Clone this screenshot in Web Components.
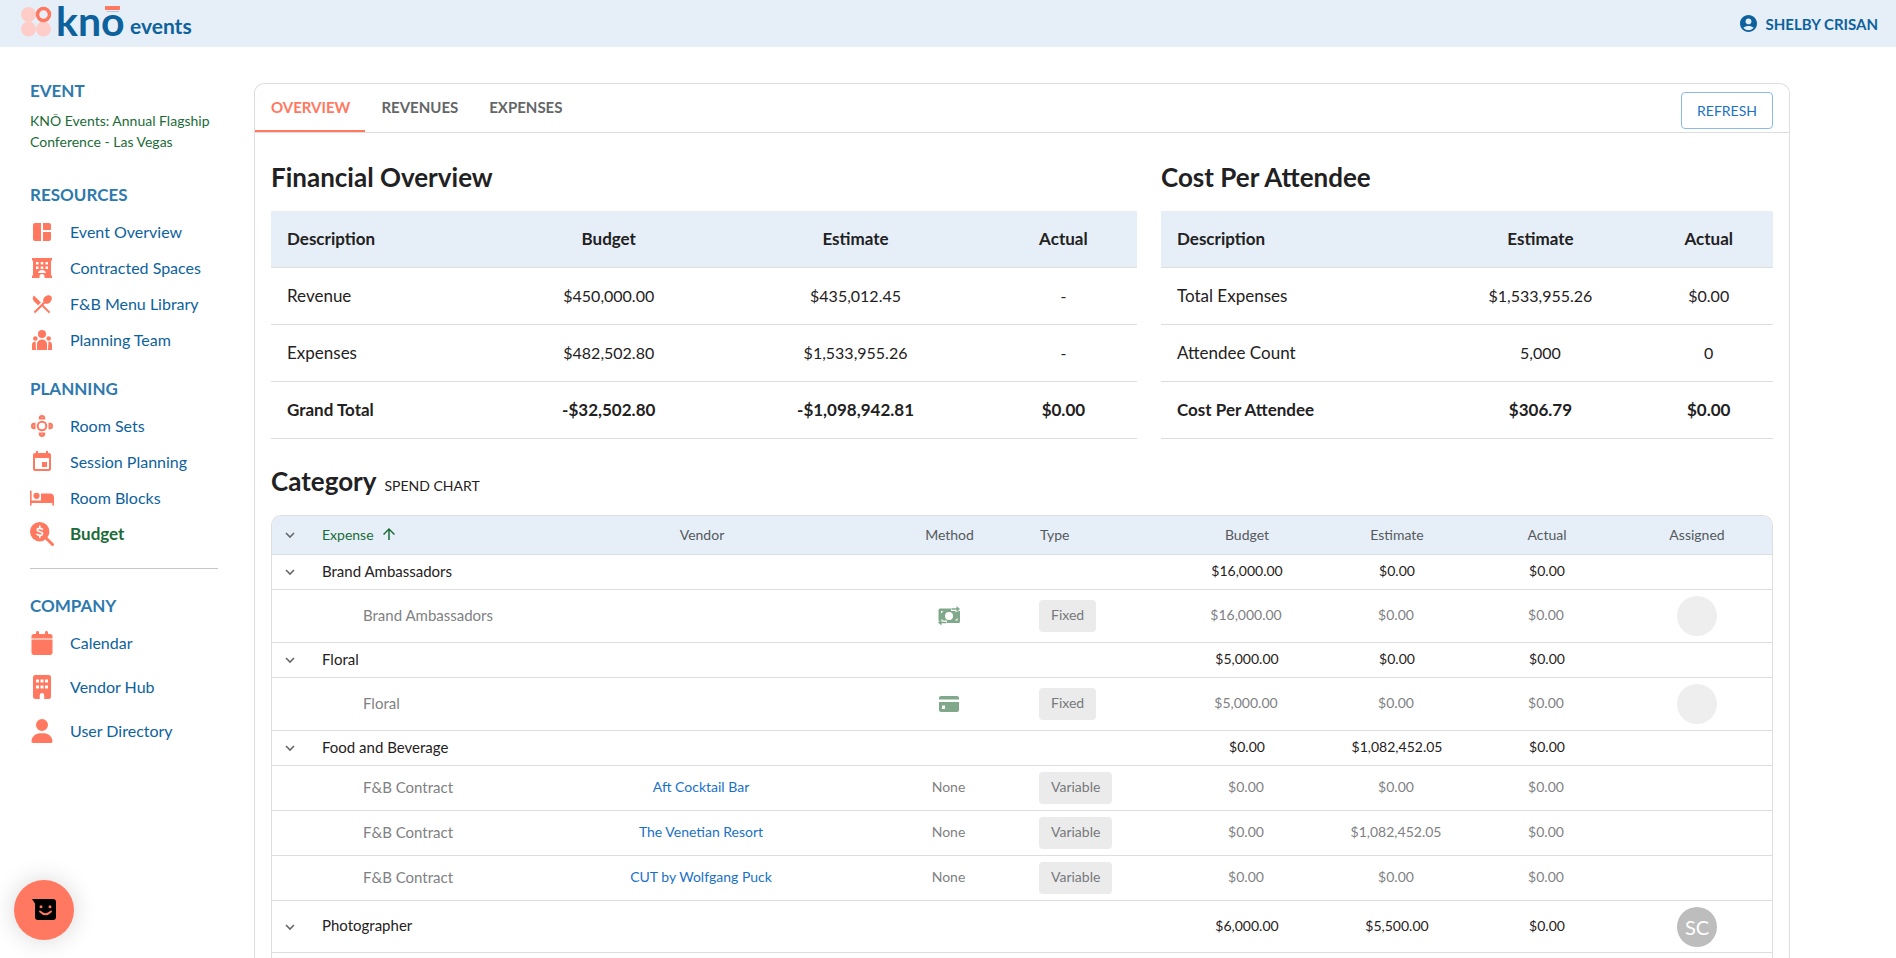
<!DOCTYPE html>
<html lang="en">
<head>
<meta charset="utf-8">
<title>knō events - Budget</title>
<style>
  * { box-sizing: border-box; }
  body {
    margin: 0;
    background: #fff;
    color: #1f2122;
    font-family: Lato, "Open Sans", sans-serif;
    font-size: 16px;
    --blue: #0d629d;
    --coral: #ff785f;
    --green: #1b6b38;
    --pale: #e6eff7;
    --line: #dcdedf;
  }
</style>
</head>
<body>
<kno-app>
  <kno-header slot="header" user="SHELBY CRISAN"></kno-header>

  <side-nav slot="nav">
    <nav-section heading="EVENT">
      <event-link>KNŌ Events: Annual Flagship Conference - Las Vegas</event-link>
    </nav-section>
    <nav-section heading="RESOURCES">
      <nav-item icon="dashboard">Event Overview</nav-item>
      <nav-item icon="hotel">Contracted Spaces</nav-item>
      <nav-item icon="menu">F&amp;B Menu Library</nav-item>
      <nav-item icon="team">Planning Team</nav-item>
    </nav-section>
    <nav-section heading="PLANNING">
      <nav-item icon="sets">Room Sets</nav-item>
      <nav-item icon="session">Session Planning</nav-item>
      <nav-item icon="bed">Room Blocks</nav-item>
      <nav-item icon="budget" active>Budget</nav-item>
    </nav-section>
    <nav-section heading="COMPANY" divided>
      <nav-item icon="calendar" tall>Calendar</nav-item>
      <nav-item icon="building" tall>Vendor Hub</nav-item>
      <nav-item icon="user" tall>User Directory</nav-item>
    </nav-section>
  </side-nav>

  <budget-card>
    <summary-table slot="summary" heading="Financial Overview" data="financial"></summary-table>
    <summary-table slot="summary" heading="Cost Per Attendee" data="attendee"></summary-table>
    <expense-grid></expense-grid>
  </budget-card>

  <chat-button slot="chat"></chat-button>
</kno-app>

<script>
const icons = {
  dashboard: ["0 0 24 24", `<path d="M11 21H5c-1.100 0-2-.9-2-2V5c0-1.100.9-2 2-2h6v18zm2 0h6c1.100 0 2-.9 2-2v-7h-8v9zm8-11V5c0-1.100-.9-2-2-2h-6v7h8z"/>`],
  hotel: ["0 0 24 24", `<path fill-rule="evenodd" d="M2 2h20v2.500h-1V19.500h1V22h-7.500v-1.500a2.500 2.500 0 0 0-5 0V22H2v-2.500h1V4.500H2zM6 6v2.500h2.500V6zm4.700 0v2.500h2.600V6zm4.800 0v2.500H18V6zM6 10.500V13h2.500v-2.500zm4.700 0V13h2.600v-2.500zm4.800 0V13H18v-2.500zM8 17h8c-.5-2-2-3-4-3s-3.500 1-4 3z"/>`],
  menu: ["0 0 24 24", `<path d="M8.100 13.340l2.830-2.830L3.910 3.500c-1.560 1.560-1.560 4.090 0 5.660l4.190 4.180zm6.780-1.810c1.530.71 3.680.21 5.270-1.380 1.910-1.910 2.280-4.650.81-6.120-1.460-1.460-4.200-1.100-6.120.81-1.590 1.590-2.090 3.740-1.380 5.270L3.700 19.870l1.410 1.410L12 14.410l6.880 6.880 1.410-1.410L13.410 13l1.470-1.470z"/>`],
  team: ["0 0 24 24", `<circle cx="12" cy="6" r="4"/><circle cx="5.300" cy="10.500" r="2.300"/><circle cx="18.700" cy="10.500" r="2.300"/><path d="M7 22v-6a5 4.500 0 0 1 10 0v6zM2 22v-5q0-3 3.500-3.400L6 22zM22 22v-5q0-3-3.500-3.400L18 22z"/>`],
  sets: ["0 0 24 24", `<g fill="none" stroke="currentColor" stroke-width="2"><circle cx="12" cy="12" r="4.300"/><path d="M9.800 4.500V4a2.200 2 0 0 1 4.400 0v.5zM9.800 19.500v.5a2.200 2 0 0 0 4.400 0v-.5zM4.500 9.800H4a2 2.200 0 0 0 0 4.400h.5zM19.500 9.800h.5a2 2.200 0 0 1 0 4.400h-.5z"/></g>`],
  session: ["0 0 24 24", `<path d="M17 12h-5v5h5v-5zM16 1v2H8V1H6v2H5c-1.110 0-1.990.9-1.990 2L3 19c0 1.100.89 2 2 2h14c1.100 0 2-.9 2-2V5c0-1.100-.9-2-2-2h-1V1h-2zm3 18H5V8h14v11z"/>`],
  bed: ["0 0 24 24", `<path d="M.8 4.500a.8.8 0 0 1 .8.8v9.200H11V7.500h9q4 0 4 4V19a.8.8 0 0 1-1.600 0v-2H1.600v2A.8.8 0 0 1 0 19V5.300a.8.8 0 0 1 .8-.8z"/><circle cx="6.500" cy="9.800" r="3.100"/>`],
  budget: ["0 0 24 24", `<circle cx="9.700" cy="9.700" r="9.700"/><path d="M16 16l6.500 6.500" stroke="currentColor" stroke-width="3" stroke-linecap="round"/><path d="M12.400 7.300C11.500 6.300 7.300 5.600 7.200 8c0 2.300 5.400 1.300 5.300 3.700-.2 2.300-4.400 1.800-5.600.600M9.800 4v1.700m0 8V15.500" fill="none" stroke="#fff" stroke-width="1.600" stroke-linecap="round"/>`],
  calendar: ["0 0 448 512", `<path d="M96 32V64H48C21.500 64 0 85.500 0 112v48H448V112c0-26.500-21.500-48-48-48H352V32c0-17.700-14.300-32-32-32s-32 14.300-32 32V64H160V32c0-17.700-14.300-32-32-32S96 14.300 96 32zM448 180H0V464c0 26.500 21.500 48 48 48H400c26.500 0 48-21.500 48-48V180z"/>`],
  building: ["0 0 384 512", `<path fill-rule="evenodd" d="M48 0h288a48 48 0 0 1 48 48v416a48 48 0 0 1-48 48h-96v-80a48 48 0 0 0-96 0v80H48a48 48 0 0 1-48-48V48A48 48 0 0 1 48 0zM64 96v64h64V96zm96 0v64h64V96zm96 0v64h64V96zM64 224v64h64v-64zm96 0v64h64v-64zm96 0v64h64v-64z"/>`],
  user: ["0 0 448 512", `<path d="M224 256A128 128 0 1 0 224 0a128 128 0 1 0 0 256zm-45.700 48C79.800 304 0 383.800 0 482.300C0 498.700 13.300 512 29.700 512H418.300c16.400 0 29.700-13.300 29.700-29.700C448 383.800 368.200 304 269.700 304H178.300z"/>`],
  account: ["2 2 20 20", `<path d="M12 2C6.480 2 2 6.480 2 12s4.480 10 10 10 10-4.480 10-10S17.520 2 12 2zm0 4c1.930 0 3.500 1.570 3.500 3.500S13.930 13 12 13s-3.500-1.570-3.500-3.500S10.070 6 12 6zm0 14c-2.030 0-4.430-.82-6.140-2.880C7.550 15.800 9.680 15 12 15s4.450.8 6.140 2.120C16.430 19.180 14.030 20 12 20z"/>`],
  chevron: ["0 0 16 16", `<path d="M4 6l4 4 4-4" fill="none" stroke="currentColor" stroke-width="1.600"/>`],
  arrow: ["0 0 24 24", `<path d="M4 12l1.410 1.410L11 7.830V20h2V7.830l5.580 5.590L20 12l-8-8-8 8z"/>`],
  card: ["0 0 24 24", `<path fill-rule="evenodd" d="M4 4h16a2 2 0 0 1 2 2v1.500H2V6a2 2 0 0 1 2-2zM2 10h20v8a2 2 0 0 1-2 2H4a2 2 0 0 1-2-2zm3 3.500V17h3v-3.500z"/>`],
  transfer: ["0 0 24 24", `<path fill-rule="evenodd" d="M3 4.500h11v2.500h4.500v1.500L21.500 7H23v10.500a1.500 1.500 0 0 1-1.500 1.500H10v-2.500H5.500V15L2.500 17H1.500V6A1.500 1.500 0 0 1 3 4.500zM12 8a4 4 0 1 0 0 8 4 4 0 0 0 0-8zM4 7v2.500L6.500 7zm16.500 9.500V14L18 16.500z"/><path d="M14.500 5H20M9.500 18.500H4" stroke="currentColor" stroke-width="1.500"/><path d="M19.500 2l3.500 3-3.500 3zM4.500 15.500L1 18.500l3.500 3z"/>`],
  chat: ["0 0 24 24", `<path fill-rule="evenodd" d="M0 1h21a3 3 0 0 1 3 3v15a3 3 0 0 1-3 3H6a3 3 0 0 1-3-3V5.500zM9 7.200a1.500 1.500 0 1 0 0 3 1.500 1.500 0 0 0 0-3zm9 0a1.500 1.500 0 1 0 0 3 1.500 1.500 0 0 0 0-3z"/><path d="M8 13.500q5.500 5.500 11 0" fill="none" stroke="#ff785f" stroke-width="1.800" stroke-linecap="round"/>`]
};

function icon(name, size) {
  const [box, shape] = icons[name];
  return `<svg viewBox="${box}" width="${size}" height="${size}" fill="currentColor" aria-hidden="true">${shape}</svg>`;
}

class KnoApp extends HTMLElement {
  constructor() {
    super();
    this.attachShadow({ mode: "open" }).innerHTML = `
      <style>
        :host { display: flex; flex-direction: column; height: 100vh; overflow: hidden; }
        .page { display: flex; flex: 1; min-height: 0; }
        main { display: flex; flex: 1; padding: 36px 106px 0 36px; min-width: 0; }
      </style>
      <slot name="header"></slot>
      <div class="page">
        <slot name="nav"></slot>
        <main><slot></slot></main>
      </div>
      <slot name="chat"></slot>
    `;
  }
}

class KnoHeader extends HTMLElement {
  constructor() {
    super();
    this.attachShadow({ mode: "open" }).innerHTML = `
      <style>
        :host {
          display: flex;
          align-items: center;
          justify-content: space-between;
          flex: none;
          height: 47px;
          padding: 0 18px 0 20px;
          background: var(--pale);
          color: var(--blue);
        }
        .logo svg { display: block; overflow: visible; }
        .logo text { font-family: Lato, sans-serif; font-weight: 700; fill: var(--blue); }
        button {
          display: flex;
          align-items: center;
          gap: 9px;
          padding: 0;
          border: 0;
          background: none;
          color: inherit;
          font: 700 15px/24px Lato, sans-serif;
        }
      </style>
      <a class="logo" href="#" aria-label="knō events">
        <svg width="180" height="47" viewBox="20 0 180 47">
          <g fill="#ffcdc8">
            <circle cx="28.500" cy="14.500" r="7.500"/>
            <circle cx="28.500" cy="29" r="7.500"/>
            <circle cx="43.500" cy="29" r="7.500"/>
          </g>
          <circle cx="43.500" cy="14.500" r="6" fill="none" stroke="#ff785f" stroke-width="3.500"/>
          <text x="56" y="36" font-size="41">knō</text>
          <!-- coral accent lies over the macron -->
          <rect x="104" y="5" width="17" height="6" fill="#e6eff7"/>
          <rect x="105" y="6" width="15" height="4" fill="#ff785f"/>
          <text x="130" y="34" font-size="21">events</text>
        </svg>
      </a>
      <button type="button">${icon("account", 17)}<span></span></button>
    `;
    this.shadowRoot.querySelector("span").textContent = this.getAttribute("user");
  }
}

class SideNav extends HTMLElement {
  constructor() {
    super();
    this.attachShadow({ mode: "open" }).innerHTML = `
      <style>
        :host { display: block; flex: none; width: 218px; padding: 32px 0 0 30px; }
      </style>
      <nav><slot></slot></nav>
    `;
  }
}

class NavSection extends HTMLElement {
  constructor() {
    super();
    this.attachShadow({ mode: "open" }).innerHTML = `
      <style>
        :host { display: block; margin-bottom: 19px; }
        :host([divided]) { margin-top: -3px; padding-top: 25px; border-top: 1px solid #c4c6c8; }
        h2 { margin: 0 0 7px; color: #2e79ad; font-size: 17px; line-height: 24px; font-weight: 700; }
        :host([divided]) h2 { margin-bottom: 3px; }
      </style>
      <h2></h2>
      <slot></slot>
    `;
    this.shadowRoot.querySelector("h2").textContent = this.getAttribute("heading");
  }
}

class EventLink extends HTMLElement {
  constructor() {
    super();
    this.attachShadow({ mode: "open" }).innerHTML = `
      <style>
        :host { display: block; padding-bottom: 12px; }
        a { color: var(--green); font-size: 14px; line-height: 21px; text-decoration: none; }
      </style>
      <a href="#"><slot></slot></a>
    `;
  }
}

class NavItem extends HTMLElement {
  constructor() {
    super();
    this.attachShadow({ mode: "open" }).innerHTML = `
      <style>
        :host { display: block; }
        a {
          display: flex;
          align-items: center;
          gap: 16px;
          height: 36px;
          color: var(--blue);
          line-height: 24px;
          text-decoration: none;
        }
        :host([tall]) a { height: 44px; }
        :host([active]) a { color: var(--green); font-size: 17px; font-weight: 700; }
        svg { flex: none; color: var(--coral); }
      </style>
      <a href="#">${icon(this.getAttribute("icon"), 24)}<span><slot></slot></span></a>
    `;
  }
}

class BudgetCard extends HTMLElement {
  constructor() {
    super();
    this.attachShadow({ mode: "open" }).innerHTML = `
      <style>
        :host {
          display: flex;
          flex-direction: column;
          flex: 1;
          min-width: 0;
          border: 1px solid var(--line);
          border-bottom: 0;
          border-radius: 10px 10px 0 0;
        }
        .bar {
          display: flex;
          align-items: flex-end;
          flex: none;
          height: 48px;
          padding-right: 16px;
          border-bottom: 1px solid var(--line);
        }
        button { font: 700 15px/24px Lato, sans-serif; background: none; }
        .tab {
          height: 48px;
          padding: 0 15px 0 16px;
          border: 0;
          border-bottom: 2px solid transparent;
          color: #646668;
        }
        .tab[aria-selected=true] { color: var(--coral); border-color: var(--coral); }
        .refresh {
          height: 37px;
          margin: 0 0 3px auto;
          padding: 0 15px;
          border: 1px solid #8cbae8;
          border-radius: 4px;
          color: #1971c8;
          font-size: 14px;
          font-weight: 400;
        }
        .content { display: flex; flex-direction: column; flex: 1; padding: 24px 16px 0; min-height: 0; }
        .summaries { display: grid; grid-template-columns: 866fr 612fr; gap: 24px; }
      </style>
      <div class="bar">
        <div role="tablist">
          <button class="tab" role="tab" aria-selected="true">OVERVIEW</button><button class="tab" role="tab" aria-selected="false">REVENUES</button><button class="tab" role="tab" aria-selected="false">EXPENSES</button>
        </div>
        <button class="refresh" type="button">REFRESH</button>
      </div>
      <div class="content">
        <div class="summaries"><slot name="summary"></slot></div>
        <slot></slot>
      </div>
    `;
    this.tabs = this.shadowRoot.querySelectorAll(".tab");
    this.tabs.forEach((tab) => tab.addEventListener("click", () => this.select(tab)));
  }

  select(tab) {
    this.tabs.forEach((t) => t.setAttribute("aria-selected", t === tab));
  }
}

const summaries = {
  financial: {
    widths: ["26%", "26%", "31%", "17%"],
    head: ["Description", "Budget", "Estimate", "Actual"],
    rows: [
      ["Revenue", "$450,000.00", "$435,012.45", "-"],
      ["Expenses", "$482,502.80", "$1,533,955.26", "-"],
      ["Grand Total", "-$32,502.80", "-$1,098,942.81", "$0.00"]
    ]
  },
  attendee: {
    widths: ["45%", "34%", "21%"],
    head: ["Description", "Estimate", "Actual"],
    rows: [
      ["Total Expenses", "$1,533,955.26", "$0.00"],
      ["Attendee Count", "5,000", "0"],
      ["Cost Per Attendee", "$306.79", "$0.00"]
    ]
  }
};

class SummaryTable extends HTMLElement {
  constructor() {
    super();
    const { widths, head, rows } = summaries[this.getAttribute("data")];
    this.attachShadow({ mode: "open" }).innerHTML = `
      <style>
        :host { display: block; min-width: 0; }
        h2 { margin: 0 0 14px; font-size: 26px; line-height: 40px; font-weight: 700; }
        table { width: 100%; table-layout: fixed; border-collapse: separate; border-spacing: 0; }
        th, td {
          height: 57px;
          padding: 0 16px 2px;
          box-sizing: border-box;
          border-bottom: 1px solid var(--line);
          text-align: center;
          font-weight: 400;
        }
        th:first-child { text-align: left; }
        thead th { background: var(--pale); }
        th, tr:last-child > td { font-size: 17px; }
        thead th, tbody tr:last-child > * { font-weight: 700; }
      </style>
      <h2>${this.getAttribute("heading")}</h2>
      <table>
        <colgroup>${widths.map((w) => `<col style="width: ${w}">`).join("")}</colgroup>
        <thead><tr>${head.map((h) => `<th scope="col">${h}</th>`).join("")}</tr></thead>
        <tbody>
          ${rows.map(([name, ...cells]) => `
            <tr><th scope="row">${name}</th>${cells.map((c) => `<td>${c}</td>`).join("")}</tr>
          `).join("")}
        </tbody>
      </table>
    `;
  }
}

const expenses = [
  { name: "Brand Ambassadors", amounts: ["$16,000.00", "$0.00", "$0.00"], items: [
    { name: "Brand Ambassadors", method: "transfer", type: "Fixed", amounts: ["$16,000.00", "$0.00", "$0.00"] }
  ] },
  { name: "Floral", amounts: ["$5,000.00", "$0.00", "$0.00"], items: [
    { name: "Floral", method: "card", type: "Fixed", amounts: ["$5,000.00", "$0.00", "$0.00"] }
  ] },
  { name: "Food and Beverage", amounts: ["$0.00", "$1,082,452.05", "$0.00"], items: [
    { name: "F&amp;B Contract", vendor: "Aft Cocktail Bar", type: "Variable", amounts: ["$0.00", "$0.00", "$0.00"] },
    { name: "F&amp;B Contract", vendor: "The Venetian Resort", type: "Variable", amounts: ["$0.00", "$1,082,452.05", "$0.00"] },
    { name: "F&amp;B Contract", vendor: "CUT by Wolfgang Puck", type: "Variable", amounts: ["$0.00", "$0.00", "$0.00"] }
  ] },
  { name: "Photographer", amounts: ["$6,000.00", "$5,500.00", "$0.00"], assigned: "SC", items: [] }
];

class ExpenseGrid extends HTMLElement {
  constructor() {
    super();
    this.attachShadow({ mode: "open" }).innerHTML = `
      <style>
        :host { display: flex; flex-direction: column; flex: 1; min-height: 0; padding-top: 22px; }
        .title { display: flex; align-items: baseline; gap: 8px; margin-bottom: 14px; }
        h2 { margin: 0; font-size: 26px; line-height: 40px; font-weight: 700; }
        button { padding: 0; border: 0; background: none; color: inherit; font: inherit; }
        .title button { font-size: 14px; }
        .frame {
          flex: 1;
          min-height: 0;
          overflow: hidden;
          border: 1px solid var(--line);
          border-bottom: 0;
          border-radius: 10px 10px 0 0;
        }
        table { width: 100%; table-layout: fixed; border-collapse: separate; border-spacing: 0; font-size: 14px; }
        col.toggle { width: 42px; }
        col.vendor { width: 22%; }
        col.method { width: 11%; }
        col.type { width: 140px; }
        col.amount { width: 10%; }
        th, td {
          height: 35px;
          padding: 0 8px 3px;
          box-sizing: border-box;
          border-bottom: 1px solid var(--line);
          text-align: center;
          font-weight: 400;
        }
        thead th, thead td { height: 39px; padding-bottom: 2px; background: var(--pale); color: #55595d; }
        .left { text-align: left; }
        tbody th { font-size: 15px; }
        .item > * { height: 45px; color: #7f8183; }
        .item td { padding: 0 9px 3px 7px; }
        .item .name { padding-left: 49px; }
        .item .type, .item .method, .avatar-row td:last-child { padding-bottom: 0; }
        .item td:last-child { padding-left: 8px; padding-right: 8px; }
        .avatar-row > * { height: 53px; }
        .group.avatar-row > * { height: 52px; }
        td.toggle { padding: 0 8px; }
        .toggle button { display: block; margin-left: 2px; color: #65686b; }
        svg { display: block; margin: auto; }
        .sort { display: flex; align-items: center; gap: 6px; color: var(--green); }
        .method svg { color: #80a98b; }
        .badge {
          display: inline-block;
          padding: 0 12px 2px;
          border-radius: 4px;
          background: #ebebeb;
          color: #76797b;
          line-height: 30px;
          vertical-align: middle;
        }
        .avatar {
          display: block;
          width: 40px;
          height: 40px;
          margin: auto;
          border-radius: 50%;
          background: #eee;
          color: #fff;
          font-size: 20px;
          line-height: 40px;
        }
        .avatar.filled { background: #bdbdbd; }
        a { color: #1971c8; text-decoration: none; }
      </style>
      <div class="title"><h2>Category</h2><button type="button">SPEND CHART</button></div>
      <div class="frame">
        <table>
          <colgroup>
            <col class="toggle"><col><col class="vendor"><col class="method"><col class="type">
            <col class="amount"><col class="amount"><col class="amount"><col class="amount">
          </colgroup>
          <thead>
            <tr>
              <td class="toggle"><button type="button" aria-label="Toggle all">${icon("chevron", 16)}</button></td>
              <th scope="col"><button class="sort" type="button">Expense ${icon("arrow", 18)}</button></th>
              <th scope="col">Vendor</th>
              <th scope="col">Method</th>
              <th scope="col" class="left">Type</th>
              <th scope="col">Budget</th>
              <th scope="col">Estimate</th>
              <th scope="col">Actual</th>
              <th scope="col">Assigned</th>
            </tr>
          </thead>
          <tbody>${expenses.map((g) => this.group(g)).join("")}</tbody>
        </table>
      </div>
    `;
  }

  connectedCallback() {
    this.shadowRoot.querySelectorAll(".group button").forEach((button) => {
      button.addEventListener("click", () => this.toggle(button.closest("tr")));
    });
  }

  toggle(row) {
    let next = row.nextElementSibling;
    while (next && next.classList.contains("item")) {
      next.hidden = !next.hidden;
      next = next.nextElementSibling;
    }
  }

  group({ name, amounts, assigned, items }) {
    return `
      <tr class="group ${assigned ? "avatar-row" : ""}">
        <td class="toggle"><button type="button" aria-label="Toggle ${name}">${icon("chevron", 16)}</button></td>
        <th scope="row" class="left">${name}</th>
        <td></td><td></td><td></td>
        ${amounts.map((a) => `<td>${a}</td>`).join("")}
        <td>${assigned ? `<span class="avatar filled">${assigned}</span>` : ""}</td>
      </tr>
      ${items.map((i) => this.item(i)).join("")}
    `;
  }

  item({ name, vendor, method, type, amounts }) {
    return `
      <tr class="item ${vendor ? "" : "avatar-row"}">
        <td></td>
        <th scope="row" class="left name">${name}</th>
        <td>${vendor ? `<a href="#">${vendor}</a>` : ""}</td>
        ${method ? `<td class="method">${icon(method, 24)}</td>` : "<td>None</td>"}
        <td class="left type"><span class="badge">${type}</span></td>
        ${amounts.map((a) => `<td>${a}</td>`).join("")}
        <td>${vendor ? "" : `<span class="avatar"></span>`}</td>
      </tr>
    `;
  }
}

class ChatButton extends HTMLElement {
  constructor() {
    super();
    this.attachShadow({ mode: "open" }).innerHTML = `
      <style>
        :host { position: fixed; left: 14px; bottom: 18px; }
        button {
          display: grid;
          place-items: center;
          width: 60px;
          height: 60px;
          padding: 0;
          border: 0;
          border-radius: 50%;
          background: var(--coral);
          color: #000;
          box-shadow: 0 0 24px rgba(0, 0, 0, .16);
        }
      </style>
      <button type="button" aria-label="Open chat">${icon("chat", 24)}</button>
    `;
  }
}

customElements.define("kno-app", KnoApp);
customElements.define("kno-header", KnoHeader);
customElements.define("side-nav", SideNav);
customElements.define("nav-section", NavSection);
customElements.define("event-link", EventLink);
customElements.define("nav-item", NavItem);
customElements.define("budget-card", BudgetCard);
customElements.define("summary-table", SummaryTable);
customElements.define("expense-grid", ExpenseGrid);
customElements.define("chat-button", ChatButton);
</script>
</body>
</html>
